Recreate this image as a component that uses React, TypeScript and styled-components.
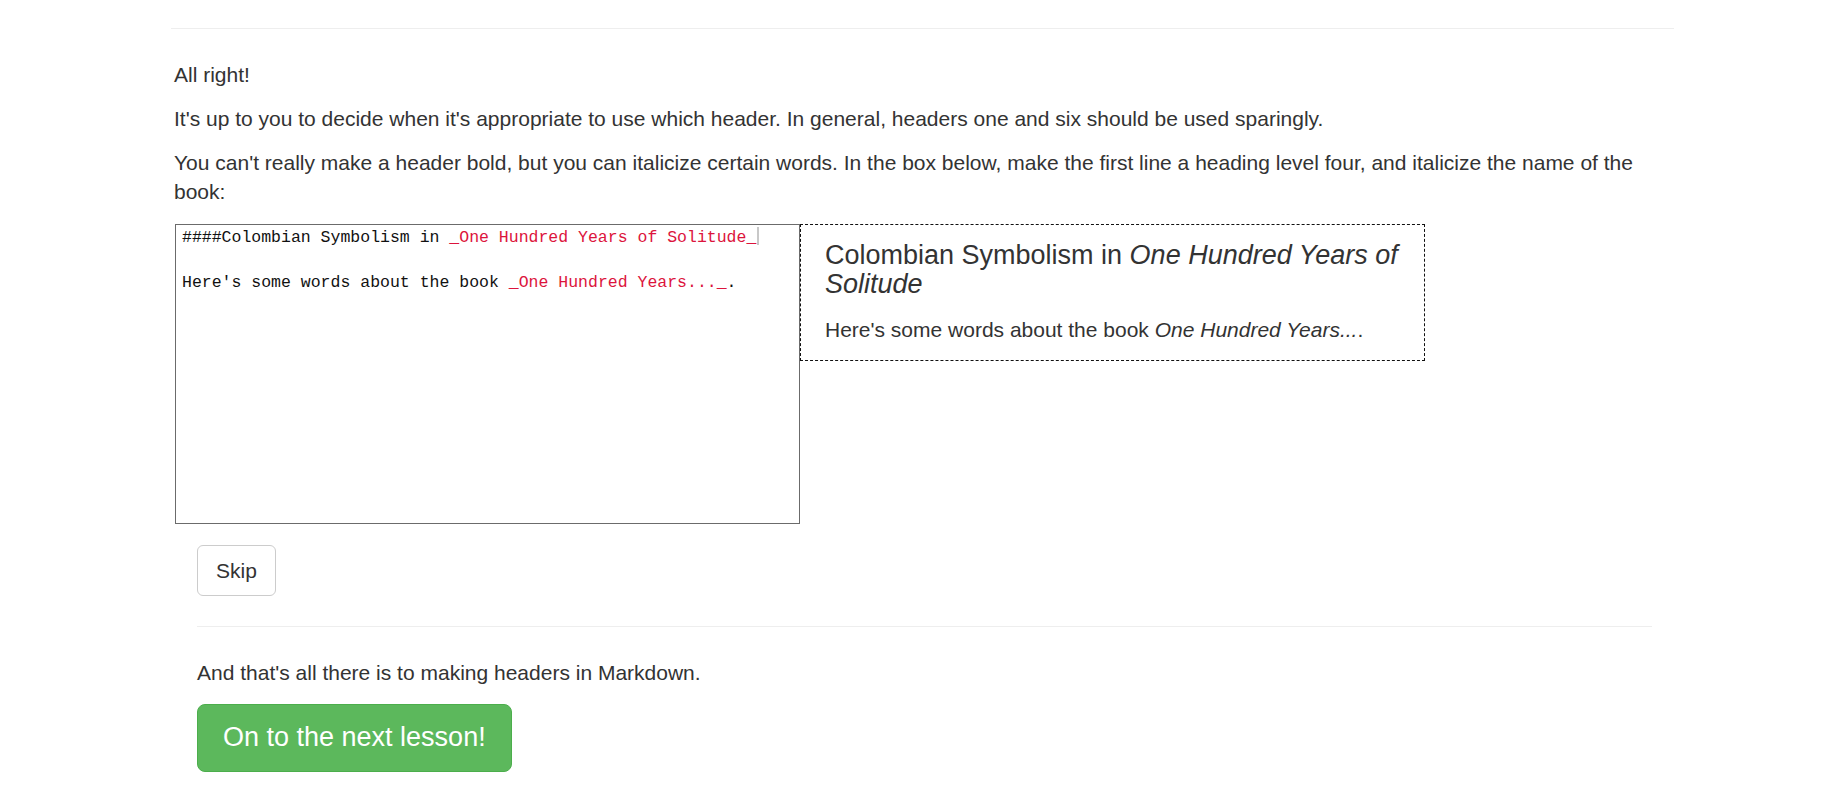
import React from 'react';
import styled, { createGlobalStyle } from 'styled-components';

const GlobalStyle = createGlobalStyle`
  body {
    margin: 0;
    background: #fff;
    color: #333;
    font-family: "Liberation Sans", Arial, sans-serif;
    font-size: 21px;
    line-height: 28.5px;
  }
`;

const Page = styled.div`
  width: 1503px;
  margin-left: 171px;
  padding-top: 28px;
  padding-bottom: 40px;
`;

const Rule = styled.hr<{ gap: number }>`
  margin: 0 0 ${({ gap }) => gap}px;
  border: 0;
  border-top: 1px solid #eee;
`;

const Lesson = styled.div`
  padding-left: 3px;
`;

const Para = styled.p`
  margin: 0 0 15.5px;
`;

const EditorRow = styled.div`
  display: flex;
  align-items: flex-start;
  margin-top: 18px;
  padding-left: 4px;
`;

const Editor = styled.div`
  box-sizing: border-box;
  width: 625px;
  height: 300px;
  border: 1px solid #6b6b6b;
  padding: 2px 6px;
  font-family: "Liberation Mono", "DejaVu Sans Mono", monospace;
  font-size: 16.5px;
  line-height: 22.5px;
  color: #111;
  white-space: pre-wrap;
`;

const Emph = styled.span`
  color: #dc143c;
`;

const Cursor = styled.span`
  display: inline-block;
  width: 2px;
  height: 18px;
  margin-left: 1px;
  vertical-align: -3px;
  background: #c8c8c8;
`;

const Preview = styled.div`
  box-sizing: border-box;
  width: 625px;
  border: 1px dashed #111;
  padding: 0 20px 3px 24px;
`;

const PreviewHeading = styled.h4`
  margin: 16px 0 17px;
  font-size: 27px;
  font-weight: 400;
  line-height: 29px;
`;

const PreviewText = styled.p`
  margin: 0 0 12px;
`;

const Footer = styled.div`
  width: 1455px;
  margin: 21px 0 0 26px;
`;

const SkipButton = styled.button`
  display: block;
  box-sizing: border-box;
  height: 51px;
  padding: 0 18px;
  border: 1px solid #ccc;
  border-radius: 6px;
  background: #fff;
  color: #333;
  font-family: inherit;
  font-size: 21px;
  margin-bottom: 30px;
`;

const Outro = styled.p`
  margin: 32px 0 16px;
`;

const NextButton = styled.button`
  display: block;
  box-sizing: border-box;
  height: 68px;
  padding: 0 25px;
  border: 1px solid #4cae4c;
  border-radius: 8px;
  background: #5cb85c;
  color: #fff;
  font-family: inherit;
  font-size: 27px;
`;

export default function App() {
  return (
    <>
      <GlobalStyle />
      <Page>
        <Rule gap={32} />
        <Lesson>
          <Para>All right!</Para>
          <Para>
            It's up to you to decide when it's appropriate to use which header. In general, headers one and six
            should be used sparingly.
          </Para>
          <Para>
            You can't really make a header bold, but you can italicize certain words. In the box below, make the
            first line a heading level four, and italicize the name of the book:
          </Para>
        </Lesson>
        <EditorRow>
          <Editor>
            {'####Colombian Symbolism in '}
            <Emph>_One Hundred Years of Solitude_</Emph>
            <Cursor />
            {'\n\nHere\'s some words about the book '}
            <Emph>_One Hundred Years..._</Emph>
            {'.'}
          </Editor>
          <Preview>
            <PreviewHeading>
              Colombian Symbolism in <em>One Hundred Years of Solitude</em>
            </PreviewHeading>
            <PreviewText>
              Here's some words about the book <em>One Hundred Years...</em>.
            </PreviewText>
          </Preview>
        </EditorRow>
        <Footer>
          <SkipButton>Skip</SkipButton>
          <Rule gap={0} />
          <Outro>And that's all there is to making headers in Markdown.</Outro>
          <NextButton>On to the next lesson!</NextButton>
        </Footer>
      </Page>
    </>
  );
}
